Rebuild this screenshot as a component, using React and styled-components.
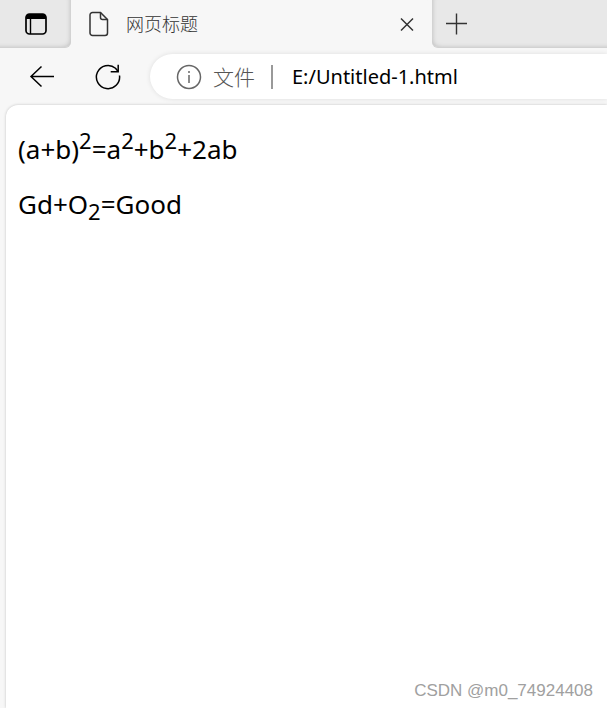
import React, { useState } from 'react';
import styled, { createGlobalStyle } from 'styled-components';

const GlobalStyle = createGlobalStyle`
  * {
    box-sizing: border-box;
  }
  body {
    margin: 0;
    background: #f7f7f7;
    font-family: 'Noto Sans', 'Noto Sans CJK SC', sans-serif;
    color: #000;
  }
  button {
    padding: 0;
    border: none;
    background: none;
    cursor: pointer;
  }
  svg {
    display: block;
  }
`;

const Browser = styled.div`
  display: flex;
  flex-direction: column;
  min-height: 100vh;
  overflow: hidden;
`;

const TabStrip = styled.header`
  display: flex;
  height: 48px;
  background: #f7f7f7;
`;

const StripSide = styled.div`
  display: flex;
  align-items: center;
  flex: ${(props) => (props.$grow ? '1' : '0 0 71px')};
  justify-content: ${(props) => (props.$grow ? 'flex-start' : 'center')};
  padding-left: ${(props) => (props.$grow ? '14px' : '0')};
  background: #e8e8e8;
  border-bottom: 1px solid #d2d2d2;
  border-radius: ${(props) => (props.$grow ? '0 0 0 6px' : '0 0 6px 0')};
  box-shadow: inset ${(props) => (props.$grow ? '3px' : '-3px')} -2px 4px -2px #c4c4c4;
`;

const Tab = styled.div`
  display: flex;
  align-items: center;
  flex: 0 1 361px;
  padding: 0 17px 0 18px;
  background: #f7f7f7;
  border-radius: 8px 8px 0 0;
`;

const TabTitle = styled.span`
  flex: 1;
  margin-left: 17px;
  font-size: 18px;
  font-weight: 300;
  line-height: 24px;
  color: #333;
`;

const Toolbar = styled.nav`
  display: flex;
  align-items: center;
  height: 57px;
  padding-left: 28px;
`;

const ToolButton = styled.button`
  margin-right: ${(props) => props.$gap}px;
`;

const AddressBar = styled.div`
  display: flex;
  align-items: center;
  flex: 1;
  height: 45px;
  padding-left: 26px;
  background: #fff;
  border-radius: 23px 0 0 23px;
  box-shadow: 0 0 5px rgba(0, 0, 0, 0.1);
`;

const Scheme = styled.label`
  margin: 0 16px 0 11px;
  font-size: 21px;
  font-weight: 300;
  line-height: 24px;
  color: #555;
  white-space: nowrap;
`;

const Divider = styled.span`
  width: 2px;
  height: 24px;
  background: #999;
`;

const AddressInput = styled.input`
  flex: 1;
  min-width: 0;
  height: 32px;
  margin-left: 19px;
  padding: 0;
  border: none;
  outline: none;
  background: transparent;
  font: 20px 'Noto Sans', sans-serif;
  color: #000;
`;

const Page = styled.main`
  display: flex;
  flex-direction: column;
  flex: 1;
  margin-left: 6px;
  padding: 26px 12px 5px;
  background: #fff;
  border-top-left-radius: 12px;
  box-shadow: 0 0 3px rgba(0, 0, 0, 0.22);
`;

const Formula = styled.p`
  margin: 0 0 19px;
  font-size: 26px;
  line-height: 36px;

  sup,
  sub {
    font-size: 22px;
    line-height: 0;
  }
`;

const Watermark = styled.small`
  margin-top: auto;
  margin-right: 2px;
  align-self: flex-end;
  font: 17px/24px 'Liberation Sans', sans-serif;
  color: #a0a0a0;
`;

const TabActionsIcon = () => (
  <svg width="22" height="22" viewBox="0 0 22 22" fill="none">
    <rect x="1" y="1" width="20" height="20" rx="3.5" stroke="#000" strokeWidth="1.7" />
    <path d="M1 6V4.2A3.2 3.2 0 0 1 4.2 1h13.6A3.2 3.2 0 0 1 21 4.2V6Z" fill="#000" />
    <path d="M5.5 6v15" stroke="#000" strokeWidth="1.4" />
  </svg>
);

const FileIcon = () => (
  <svg width="20" height="26" viewBox="0 0 20 26" fill="none" stroke="#333" strokeWidth="1.5">
    <path d="M3.5 1.5h8L18.5 8.5v13.5a2.5 2.5 0 0 1-2.5 2.5H3.5A2.5 2.5 0 0 1 1 22V4a2.5 2.5 0 0 1 2.5-2.5Z" />
    <path d="M11.5 1.5V6.5a2 2 0 0 0 2 2h5" />
  </svg>
);

const CloseIcon = () => (
  <svg width="16" height="16" viewBox="0 0 16 16" stroke="#333" strokeWidth="1.5">
    <path d="M2 2.5l12 12M14 2.5l-12 12" />
  </svg>
);

const PlusIcon = () => (
  <svg width="22" height="22" viewBox="0 0 22 22" stroke="#333" strokeWidth="1.4">
    <path d="M10.5 .5v21M0 10.5h21" />
  </svg>
);

const BackIcon = () => (
  <svg width="28" height="26" viewBox="0 0 28 26" fill="none" stroke="#000" strokeWidth="1.5">
    <path d="M26 12.5H3M13.5 2.5 3 12.5l10.5 10" />
  </svg>
);

const ReloadIcon = () => (
  <svg width="26" height="26" viewBox="0 0 26 26" fill="none" stroke="#000" strokeWidth="1.5">
    <path d="M24.5 11.5A11.6 11.6 0 1 1 20.5 4.2L23.2 7.5" />
    <path d="M23.2 .8v7h-7.5" />
  </svg>
);

const InfoIcon = () => (
  <svg width="26" height="26" viewBox="0 0 26 26" fill="none" stroke="#666" strokeWidth="1.5">
    <circle cx="13" cy="13" r="11.5" />
    <path d="M13 11v8" />
    <circle cx="13" cy="8" r="1" fill="#666" stroke="none" />
  </svg>
);

const App = () => {
  const [address, setAddress] = useState('E:/Untitled-1.html');

  return (
    <>
      <GlobalStyle />
      <Browser>
        <TabStrip>
          <StripSide>
            <button type="button" aria-label="Tab 操作">
              <TabActionsIcon />
            </button>
          </StripSide>
          <Tab>
            <FileIcon />
            <TabTitle>网页标题</TabTitle>
            <button type="button" aria-label="关闭标签页">
              <CloseIcon />
            </button>
          </Tab>
          <StripSide $grow>
            <button type="button" aria-label="新建标签页">
              <PlusIcon />
            </button>
          </StripSide>
        </TabStrip>
        <Toolbar>
          <ToolButton type="button" aria-label="返回" $gap={39}>
            <BackIcon />
          </ToolButton>
          <ToolButton type="button" aria-label="刷新" $gap={29}>
            <ReloadIcon />
          </ToolButton>
          <AddressBar>
            <InfoIcon />
            <Scheme htmlFor="address">文件</Scheme>
            <Divider />
            <AddressInput
              id="address"
              value={address}
              spellCheck={false}
              onChange={(e) => setAddress(e.target.value)}
            />
          </AddressBar>
        </Toolbar>
        <Page>
          <Formula>
            (a+b)<sup>2</sup>=a<sup>2</sup>+b<sup>2</sup>+2ab
          </Formula>
          <Formula>
            Gd+O<sub>2</sub>=Good
          </Formula>
          <Watermark>CSDN @m0_74924408</Watermark>
        </Page>
      </Browser>
    </>
  );
};

export default App;
